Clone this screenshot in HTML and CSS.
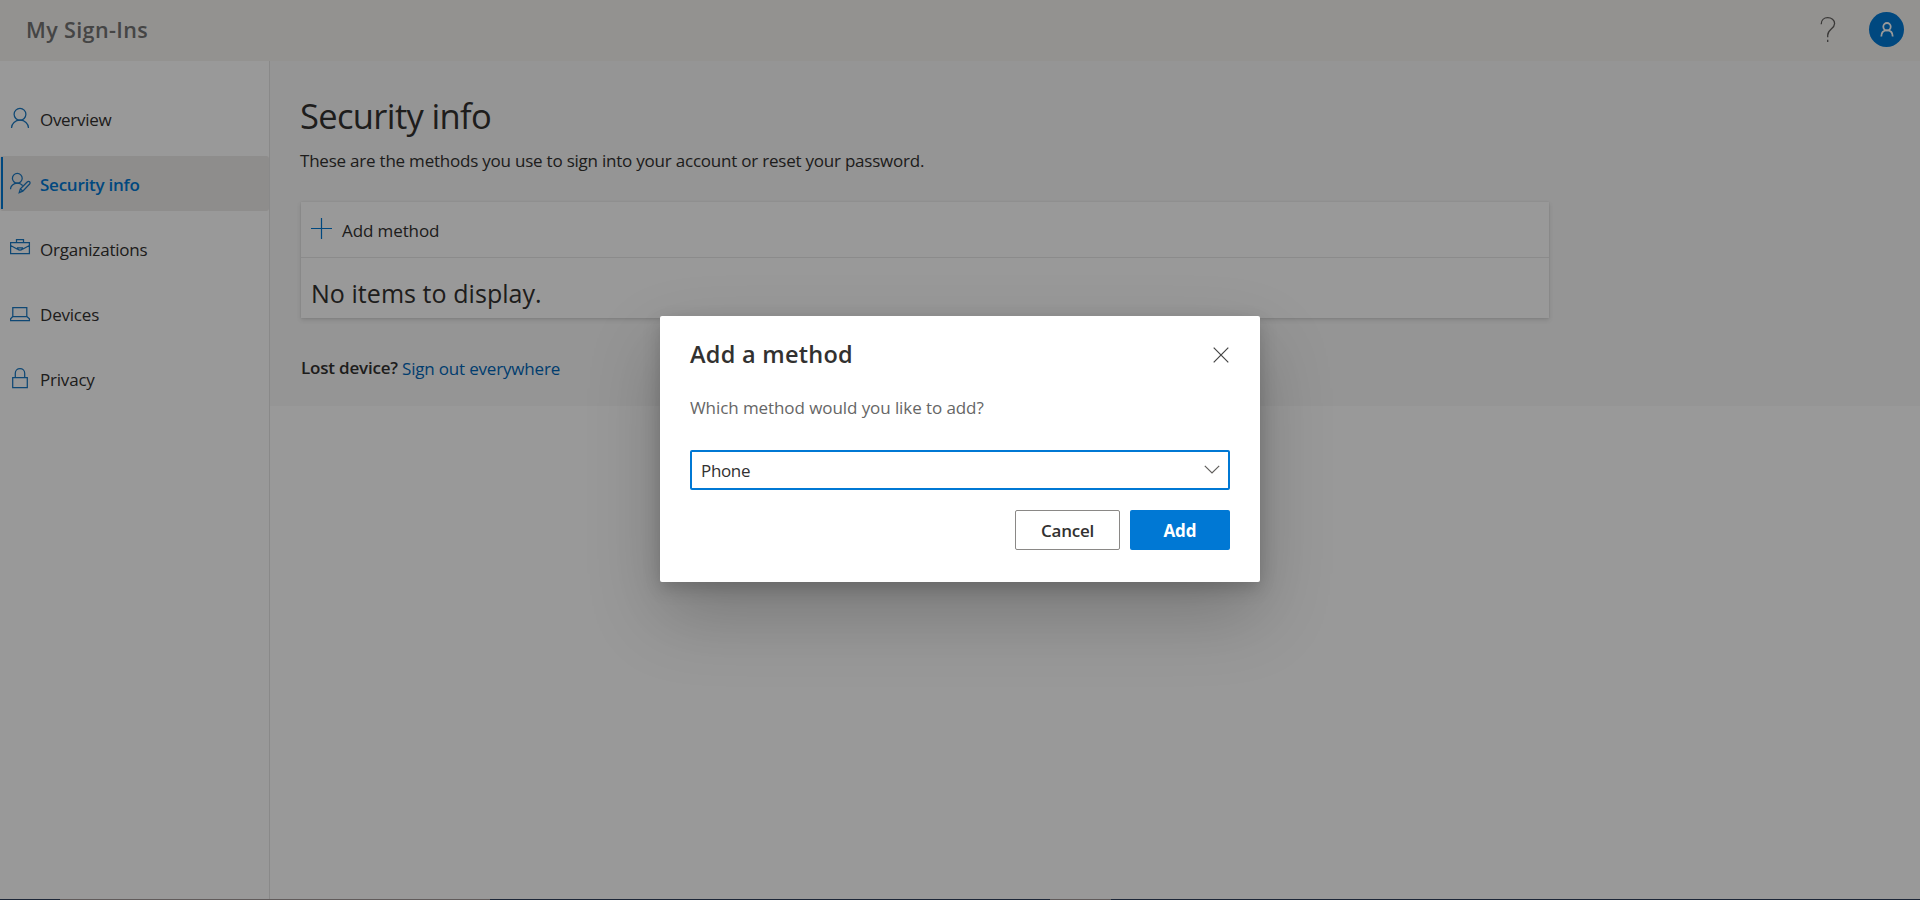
FILE: index.html
```html
<!DOCTYPE html>
<html lang="en">
<head>
<meta charset="utf-8">
<title>My Sign-Ins</title>
<link rel="stylesheet" href="styles.css">
</head>
<body>
<div class="page">
  <header class="topbar">
    <div class="brand">My Sign-Ins</div>
    <div class="tools">
      <svg class="help" width="16" height="28" viewBox="0 0 16 28"><path d="M1.200 8.200C1.200 4.200 4 1.700 7.700 1.700S14.600 4 14.600 7.500C14.600 13 7.700 13.200 7.700 19.200V21.200"/><path d="M7.700 23.800V26"/></svg>
      <div class="avatar"><svg width="14" height="15" viewBox="0 0 14 15"><circle cx="7" cy="4.700" r="3.700"/><path d="M1.300 14.500C1.300 10.500 3.500 8.400 7 8.400S12.700 10.500 12.700 14.500"/></svg></div>
    </div>
  </header>
  <div class="content">
    <nav class="sidebar">
      <a class="item"><svg class="icon" viewBox="0 0 22 22"><circle cx="10" cy="7.300" r="5.900"/><path d="M1.500 21C1.500 16.500 5.300 13.200 10 13.200S18.500 16.500 18.500 21"/></svg><span class="label overview">Overview</span></a>
      <a class="item selected"><svg class="icon" viewBox="0 0 22 22"><circle cx="7.300" cy="6.300" r="4.900"/><path d="M.5 17.200C.5 13.800 3.500 11.200 7.300 11.200C9.400 11.200 11.300 12 12.600 13.500M9.200 20.600L10.400 16.800L17.200 10C18 9.200 19 9.200 19.600 9.800S20.200 11.400 19.400 12.200L12.800 19.200ZM10.400 16.800L12.800 19.200"/></svg><span class="label">Security info</span></a>
      <a class="item"><svg class="icon" viewBox="0 0 22 22"><path d="M.6 5.500H19.400V16.500H.6ZM6.500 5.500V2.700H13.500V5.500M.6 8.500L7.500 12.200M19.400 8.500L12.500 12.200M7.500 10.800H12.500C12.500 13.800 7.500 13.800 7.500 10.800Z"/></svg><span class="label">Organizations</span></a>
      <a class="item"><svg class="icon" viewBox="0 0 22 22"><path d="M2.800 5.500H16.800V14.500H2.800ZM2.800 14.500L.6 16.800V18.500H19.400V16.800L16.800 14.500"/></svg><span class="label">Devices</span></a>
      <a class="item"><svg class="icon" viewBox="0 0 22 22"><path d="M2.700 10.500H17.300V20.500H2.700ZM5.300 10.500V6.200C5.300 3.500 7.300 1.600 10 1.600S14.700 3.500 14.700 6.200V10.500"/></svg><span class="label">Privacy</span></a>
    </nav>
    <main class="main">
      <h1 class="title">Security info</h1>
      <p class="intro">These are the methods you use to sign into your account or reset your password.</p>
      <section class="card">
        <div class="add-row"><svg class="plus" width="21" height="21" viewBox="0 0 21 21"><path d="M0 10.500H21M10.500 0V21"/></svg><span class="add-label">Add method</span></div>
        <div class="empty">No items to display.</div>
      </section>
      <div class="lost"><strong class="lost-label">Lost device?</strong><a class="link">Sign out everywhere</a></div>
    </main>
  </div>
  <div class="taskbar"><span class="window-wide"></span><span class="window-small"></span></div>
</div>
<div class="overlay">
  <div class="dialog" role="dialog">
    <div class="dialog-head">
      <h2 class="dialog-title">Add a method</h2>
      <svg class="close" width="16" height="16" viewBox="0 0 16 16"><path d="M.7.7L15.300 15.300M15.300.7L.7 15.300"/></svg>
    </div>
    <p class="question">Which method would you like to add?</p>
    <div class="select"><span class="value">Phone</span><svg class="chevron" width="16" height="10" viewBox="0 0 16 10"><path d="M.8.8L8 8L15.200.8"/></svg></div>
    <div class="actions"><button class="button cancel">Cancel</button><button class="button add">Add</button></div>
  </div>
</div>
</body>
</html>
```
FILE: styles.css
```css
* { box-sizing: border-box; }
body {
  margin: 0;
  font: 17px/24px "Open Sans", "Noto Sans", sans-serif;
  letter-spacing: -0.2px;
  color: #323130;
  overflow: hidden;
}
h1, h2, p { margin: 0; }
svg { display: block; fill: none; flex: none; }

.page { height: 900px; display: flex; flex-direction: column; background: #fff; }

.topbar {
  height: 61px;
  flex: none;
  display: flex;
  justify-content: space-between;
  align-items: center;
  padding: 0 16px 2px 26px;
  background: #f5f3f1;
}
.brand { font-size: 21.5px; font-weight: 600; letter-spacing: 0.38px; color: #737373; }
.tools { display: flex; align-items: center; gap: 33px; }
.help { stroke: #605e5c; stroke-width: 1.3; }
.avatar {
  width: 35px;
  height: 35px;
  border-radius: 50%;
  background: #0078d4;
  display: flex;
  align-items: center;
  justify-content: center;
}
.avatar svg { stroke: #fff; stroke-width: 1.8; }

.content { flex: 1; display: flex; min-height: 0; }
.sidebar {
  width: 270px;
  flex: none;
  padding-top: 30px;
  border-right: 1px solid #e5e5e5;
  display: flex;
  flex-direction: column;
  gap: 10px;
}
.item { height: 55px; display: flex; align-items: center; padding-left: 10px; gap: 8px; }
.icon { width: 22px; height: 22px; margin-bottom: 1px; stroke: #1a78c2; stroke-width: 1.25; }
.label { padding-top: 2px; }
.overview { letter-spacing: -0.3px; }
.selected {
  color: #0078d4;
  font-weight: 600;
  letter-spacing: -0.25px;
  background: linear-gradient(#0078d4, #0078d4) 1px 1px / 2px 52px no-repeat, #edebe9;
  border-radius: 3px;
}

.main { flex: 1; height: 345px; padding: 31px 0 0 30px; background: #f8f8f8; }
.title { font-size: 34.5px; line-height: 48px; font-weight: 400; letter-spacing: -0.65px; }
.intro { margin-top: 9px; letter-spacing: -0.22px; }
.card {
  width: 1248px;
  height: 116px;
  margin: 29px 0 0 1px;
  background: #fff;
  box-shadow: 0 2px 4.500px rgba(0, 0, 0, 0.13), 0 0.4px 1.200px rgba(0, 0, 0, 0.11);
}
.add-row { height: 56px; display: flex; align-items: center; gap: 9px; padding-left: 10px; border-bottom: 1px solid #e8e8e8; }
.plus { stroke: #0078d4; stroke-width: 1.2; margin-bottom: 2px; }
.add-label { padding: 2px 0 0 1px; letter-spacing: -0.1px; }
.empty { padding: 18px 0 0 10px; font-size: 25px; line-height: 34px; letter-spacing: 0.05px; }
.lost { display: flex; margin: 38px 0 0 1px; }
.lost-label { width: 101px; font-weight: 600; letter-spacing: -0.2px; }
.link { padding-top: 1px; color: #0067b8; letter-spacing: -0.18px; }

.taskbar { height: 1px; flex: none; display: flex; background: #30405c; }
.window-wide { width: 430px; margin-left: 60px; background: #a09898; }
.window-small { width: 61px; margin-left: 560px; background: #a09898; }

.overlay {
  position: absolute;
  inset: 0;
  display: flex;
  align-items: center;
  justify-content: center;
  padding-bottom: 2px;
  background: rgba(0, 0, 0, 0.4);
}
.dialog {
  width: 600px;
  height: 266px;
  padding: 22px 30px 0;
  border-radius: 2px;
  background: #fff;
  box-shadow: 0 32px 72px rgba(0, 0, 0, 0.22), 0 6px 18px rgba(0, 0, 0, 0.18);
}
.dialog-head { display: flex; justify-content: space-between; }
.dialog-title { font-size: 23.5px; line-height: 32px; font-weight: 600; letter-spacing: 0.26px; }
.close { margin: 9px 1px 0 0; stroke: #444; stroke-width: 1.2; }
.question { margin-top: 26px; color: #666; letter-spacing: -0.08px; }
.select {
  height: 40px;
  margin-top: 30px;
  padding: 0 8px 0 9px;
  border: 2px solid #0078d4;
  border-radius: 2px;
  display: flex;
  justify-content: space-between;
  align-items: center;
}
.value { padding-top: 1px; letter-spacing: -0.35px; }
.chevron { stroke: #605e5c; stroke-width: 1.2; }
.actions { display: flex; justify-content: flex-end; gap: 10px; margin-top: 20px; }
.button {
  width: 105px;
  height: 40px;
  padding: 2px 0 0;
  border: 1px solid #8a8886;
  border-radius: 2px;
  background: #fff;
  color: #323130;
  font: 600 17px/24px "Open Sans", "Noto Sans", sans-serif;
  letter-spacing: -0.25px;
}
.button.add { width: 100px; border: 0; background: #0078d4; color: #fff; font-weight: 700; letter-spacing: 0; }
```
